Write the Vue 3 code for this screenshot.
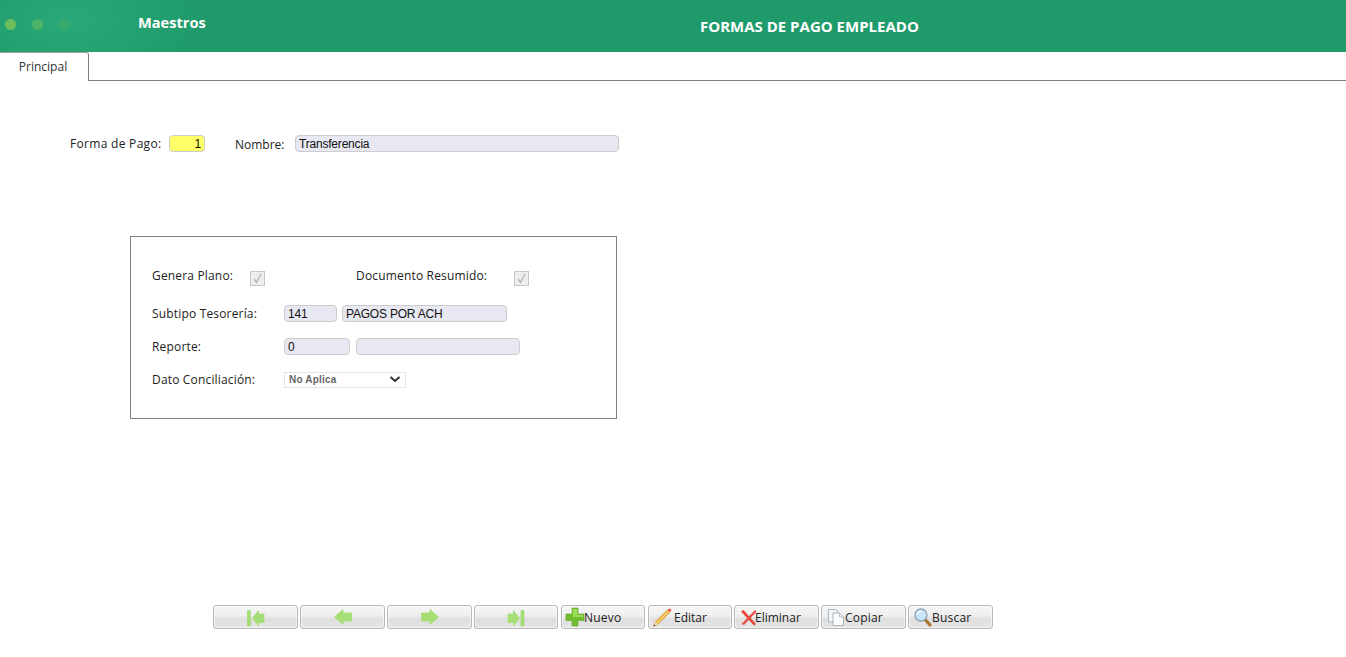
<script setup>
const navButtons = [
  { id: 'first', bar: 'M0.5 2.500h3v15.500h-3z', arrow: 'M5.500 10 L11.500 2.500 V6 H17 V14.500 H11.500 V18 Z' },
  { id: 'prev', bar: '', arrow: 'M0.500 9 L9 1.500 V5 H17.500 V13 H9 V16.500 Z' },
  { id: 'next', bar: '', arrow: 'M17.500 9 L9 1.500 V5 H0.500 V13 H9 V16.500 Z' },
  { id: 'last', bar: 'M14 2.500h3v15.500h-3z', arrow: 'M12.500 10 L6.500 2.500 V6 H1 V14.500 H6.500 V18 Z' }
]
</script>

<template>
  <div class="page">
    <header class="topbar">
      <div class="dots">
        <span class="dot d1"></span>
        <span class="dot d2"></span>
        <span class="dot d3"></span>
      </div>
      <div class="section">Maestros</div>
      <div class="title">FORMAS DE PAGO EMPLEADO</div>
    </header>

    <nav class="tabs">
      <div class="tab">Principal</div>
    </nav>

    <section class="head-row">
      <label class="lbl lbl-forma">Forma de Pago:</label>
      <input class="field code" value="1" readonly />
      <label class="lbl lbl-nombre">Nombre:</label>
      <input class="field name" value="Transferencia" readonly />
    </section>

    <section class="panel">
      <div class="row row-checks">
        <span class="lbl c1">Genera Plano:</span>
        <span class="check"><svg viewBox="0 0 15 15" width="15" height="15"><path d="M4 8 L6.500 11.500 L11 3" fill="none" stroke="#b4b4b4" stroke-width="1.400"/></svg></span>
        <span class="lbl c2">Documento Resumido:</span>
        <span class="check"><svg viewBox="0 0 15 15" width="15" height="15"><path d="M4 8 L6.500 11.500 L11 3" fill="none" stroke="#b4b4b4" stroke-width="1.400"/></svg></span>
      </div>
      <div class="row row-sub">
        <span class="lbl c1w">Subtipo Tesorería:</span>
        <input class="field f141" value="141" readonly />
        <input class="field fach" value="PAGOS POR ACH" readonly />
      </div>
      <div class="row row-rep">
        <span class="lbl c1w">Reporte:</span>
        <input class="field f0" value="0" readonly />
        <input class="field frep" value="" readonly />
      </div>
      <div class="row row-dato">
        <span class="lbl c1w">Dato Conciliación:</span>
        <div class="select">
          <span>No Aplica</span>
          <svg viewBox="0 0 12 7" width="12" height="7"><path d="M1.500 1 L6 5 L10.500 1" fill="none" stroke="#333" stroke-width="2"/></svg>
        </div>
      </div>
    </section>

    <footer class="toolbar">
      <button v-for="b in navButtons" :key="b.id" class="btn nav" :class="b.id" type="button">
        <svg viewBox="0 0 18 19" width="18" height="19">
          <path v-if="b.bar" :d="b.bar" fill="#a6de76" stroke="#93d062" stroke-width="0.500" />
          <path :d="b.arrow" fill="#a6de76" stroke="#a6de76" stroke-width="0.800" stroke-linejoin="round" />
        </svg>
      </button>

      <button class="btn nuevo" type="button">
        <svg class="ico" viewBox="0 0 20 20" width="20" height="20">
          <path d="M7 1h6v6h6v6.500h-6V19H7v-5.500H1V7h6z" fill="#72bd30" stroke="#5ea626" stroke-width="0.600"/>
          <path d="M7.800 2h4.400v6h5.800v2H7.800z" fill="#9ade58"/>
        </svg>
        <span class="tx-nuevo">Nuevo</span>
      </button>
      <button class="btn editar" type="button">
        <svg class="ico" viewBox="0 0 20 20" width="20" height="20">
          <path d="M1.500 19.500 L3.500 14.500 L15.500 2.800 L18 5.300 L6 17.200 Z" fill="#f2b84b" stroke="#c98a2a" stroke-width="0.500"/>
          <path d="M5 16 L16.800 4.200" stroke="#fbdc92" stroke-width="1"/>
          <path d="M1.500 19.500 L3.500 14.500 L6 17.200 Z" fill="#f0d5a8"/>
          <path d="M1.500 19.500 L2.300 17.500 L3.600 18.800 Z" fill="#4a3a28"/>
          <path d="M15.500 2.800 L18 5.300 L19.500 3 L18 1.500 Z" fill="#e4573c"/>
        </svg>
        <span class="tx-edit">Editar</span>
      </button>
      <button class="btn" type="button">
        <svg class="ico" viewBox="0 0 20 20" width="20" height="20">
          <path d="M3 4.500 L5.500 3 L18 17 L16 18.500 Z" fill="#e8443a"/>
          <path d="M17 3 L18.500 4.800 L6 18 L3.500 17 Z" fill="#ec5048"/>
        </svg>
        <span class="tx-elim">Eliminar</span>
      </button>
      <button class="btn" type="button">
        <svg class="ico" viewBox="0 0 20 20" width="20" height="20">
          <path d="M3.500 2.500h7l2.500 2.500v10H3.500z" fill="#f3f6f8" stroke="#a4adb4" stroke-width="0.900"/>
          <path d="M8 6h6.500l4 4v8.500H8z" fill="#fbfcfd" stroke="#a4adb4" stroke-width="0.900"/>
          <path d="M14.500 6v4h4" fill="#e6ebef" stroke="#a4adb4" stroke-width="0.700"/>
        </svg>
        <span>Copiar</span>
      </button>
      <button class="btn" type="button">
        <svg class="ico" viewBox="0 0 20 20" width="20" height="20">
          <path d="M13.500 13 L18 18" stroke="#a8742c" stroke-width="3.200" stroke-linecap="round"/>
          <circle cx="9" cy="8" r="6" fill="#cbe5f8" stroke="#8aa2b8" stroke-width="1.300"/>
          <path d="M5.500 7.500 a3.500 3.500 0 0 1 3.500-3.500" fill="none" stroke="#fff" stroke-width="1.300"/>
        </svg>
        <span>Buscar</span>
      </button>
    </footer>
  </div>
</template>

<style scoped>
.page {
  width: 1346px;
  height: 657px;
  overflow: hidden;
  background: #fff;
  font-family: "Open Sans", "Noto Sans", sans-serif;
  color: #222;
  position: relative;
}
.topbar {
  height: 52px;
  display: flex;
  align-items: flex-start;
  background: radial-gradient(ellipse 130px 70px at 70px 20px, #2ba878 0%, #1f9b6b 100%);
  background-color: #1e9a6a;
  color: #fff;
  position: relative;
}
.dots { display: flex; gap: 16px; padding: 19px 0 0 5px; width: 138px; box-sizing: border-box; }
.dot { width: 11px; height: 11px; border-radius: 50%; display: block; }
.d1 { background: #6cbd5c; }
.d2 { background: #4cb368; }
.d3 { background: #36a96c; }
.section { font-size: 14.6px; font-weight: 700; line-height: 19px; padding-top: 13px; width: 562px; }
.title { font-size: 15px; font-weight: 700; line-height: 20px; padding-top: 16px; }

.tabs { height: 28px; border-bottom: 1px solid #808080; box-sizing: content-box; }
.tab {
  width: 89px;
  height: 29px;
  box-sizing: border-box;
  padding-right: 2px;
  background: #fff;
  border-right: 1px solid #808080;
  border-top: 1px solid #a0a0a0;
  border-top-right-radius: 3px;
  font-size: 12px;
  line-height: 28px;
  text-align: center;
  color: #333;
}

.lbl { font-size: 12px; line-height: 16px; color: #222; letter-spacing: 0.17px; }
.field {
  box-sizing: border-box;
  height: 17px;
  border: 1px solid #ccc;
  border-radius: 4px;
  background: #e8e8f2;
  font-family: "Liberation Sans", Arial, sans-serif;
  font-size: 12px;
  letter-spacing: -0.2px;
  color: #111;
  padding: 1px 3px 0;
  outline: none;
  display: block;
}

.head-row {
  display: flex;
  align-items: center;
  padding: 54px 0 0 70px;
  height: 17px;
}
.lbl-forma { width: 99px; letter-spacing: 0.3px; }
.code { width: 36px; background: #ffff66; text-align: right; }
.lbl-nombre { margin: 2px 0 0 30px; width: 60px; letter-spacing: 0; }
.name { width: 324px; }

.panel {
  box-sizing: border-box;
  width: 487px;
  height: 183px;
  margin: 84px 0 0 130px;
  border: 1px solid #808080;
  padding-left: 21px;
  position: relative;
}
.row { display: flex; align-items: center; height: 17px; }
.row-checks { margin-top: 30px; }
.row-sub { margin-top: 21px; }
.row-rep { margin-top: 16px; }
.row-dato { margin-top: 16px; }
.c1 { width: 98px; }
.c2 { width: 158px; margin-left: 91px; }
.c1w { width: 132px; }
.check {
  width: 15px;
  height: 15px;
  box-sizing: border-box;
  border: 1px solid #c8c8c8;
  background: #eee;
  display: block;
  margin-top: 6px;
  position: relative;
}
.check svg { position: absolute; left: -1px; top: -1px; }
.f141 { width: 53px; }
.fach { width: 165px; margin-left: 5px; }
.f0 { width: 66px; }
.frep { width: 164px; margin-left: 6px; }
.select {
  width: 122px;
  height: 16px;
  box-sizing: border-box;
  border: 1px solid #e4e4e4;
  background: #fff;
  display: flex;
  align-items: center;
  justify-content: space-between;
  padding: 0 4px;
  font-family: "Liberation Sans", Arial, sans-serif;
  font-size: 10px;
  font-weight: 700;
  letter-spacing: 0.2px;
  color: #666;
}

.toolbar {
  position: absolute;
  left: 213px;
  top: 605px;
  display: flex;
  gap: 2px;
}
.btn {
  box-sizing: border-box;
  height: 24px;
  width: 85px;
  border: 1px solid #b8b8b8;
  border-radius: 3px;
  background: linear-gradient(#f6f6f6 0%, #eeeeee 45%, #dedede 60%, #e6e6e6 100%);
  box-shadow: inset 0 0 0 1px rgba(255, 255, 255, .5);
  font-family: "Open Sans", "Noto Sans", sans-serif;
  font-size: 12px;
  letter-spacing: 0.2px;
  color: #222;
  display: flex;
  align-items: center;
  padding: 0 0 0 3px;
  margin: 0;
}
.btn.nav { justify-content: center; padding: 0; }
.btn.last { width: 84px; margin-right: 1px; }
.btn.nuevo { width: 84px; }
.btn.editar { width: 84px; margin-left: 1px; }
.ico { flex: none; }
.tx-nuevo { margin-left: -1px; }
.tx-edit { margin-left: 2px; letter-spacing: 0; }
.tx-elim { margin-left: -3px; letter-spacing: 0; }
</style>

<style>
html, body { margin: 0; background: #fff; }
</style>
